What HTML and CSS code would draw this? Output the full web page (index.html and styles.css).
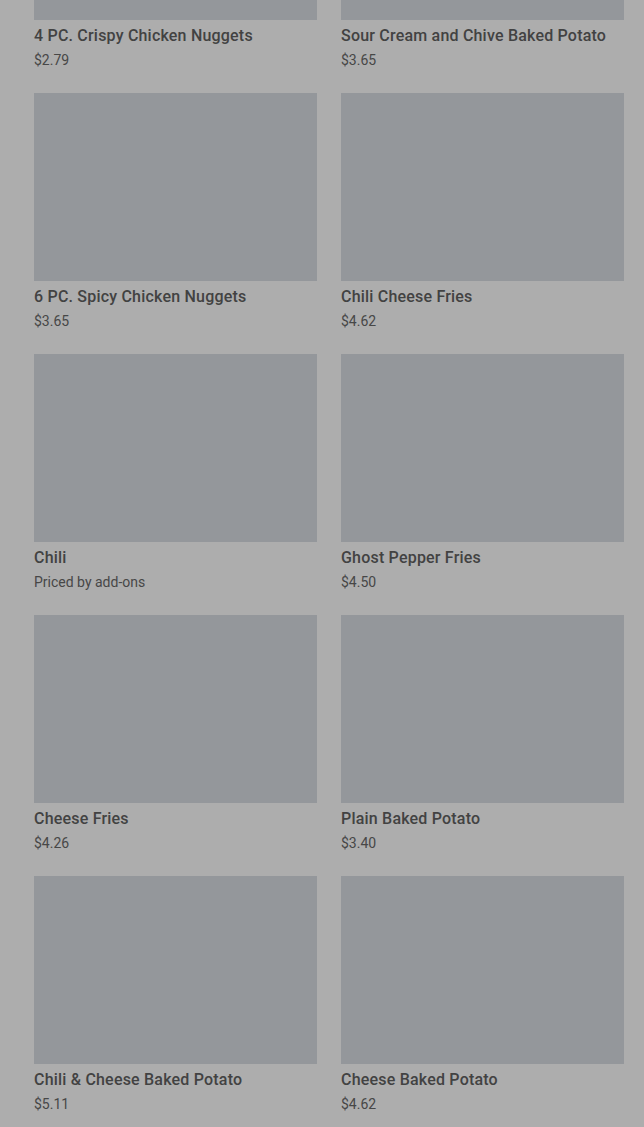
FILE: index.html
```html
<!DOCTYPE html>
<html lang="en">
<head>
    <meta charset="UTF-8" />
    <meta name="viewport" content="width=device-width, initial-scale=1.0" />
    <title>Menu - Sides</title>
    <link rel="stylesheet" href="styles.css">
</head>
<body>
    <div class="menu-grid">
        <div class="menu-item">
            <div class="item-image"></div>
            <div class="item-name">4 PC. Crispy Chicken Nuggets</div>
            <div class="item-price">$2.79</div>
        </div>
        <div class="menu-item">
            <div class="item-image"></div>
            <div class="item-name">Sour Cream and Chive Baked Potato</div>
            <div class="item-price">$3.65</div>
        </div>
        <div class="menu-item">
            <div class="item-image"></div>
            <div class="item-name">6 PC. Spicy Chicken Nuggets</div>
            <div class="item-price">$3.65</div>
        </div>
        <div class="menu-item">
            <div class="item-image"></div>
            <div class="item-name">Chili Cheese Fries</div>
            <div class="item-price">$4.62</div>
        </div>
        <div class="menu-item">
            <div class="item-image"></div>
            <div class="item-name">Chili</div>
            <div class="item-price">Priced by add-ons</div>
        </div>
        <div class="menu-item">
            <div class="item-image"></div>
            <div class="item-name">Ghost Pepper Fries</div>
            <div class="item-price">$4.50</div>
        </div>
        <div class="menu-item">
            <div class="item-image"></div>
            <div class="item-name">Cheese Fries</div>
            <div class="item-price">$4.26</div>
        </div>
        <div class="menu-item">
            <div class="item-image"></div>
            <div class="item-name">Plain Baked Potato</div>
            <div class="item-price">$3.40</div>
        </div>
        <div class="menu-item">
            <div class="item-image"></div>
            <div class="item-name">Chili &amp; Cheese Baked Potato</div>
            <div class="item-price">$5.11</div>
        </div>
        <div class="menu-item">
            <div class="item-image"></div>
            <div class="item-name">Cheese Baked Potato</div>
            <div class="item-price">$4.62</div>
        </div>
    </div>
</body>
</html>
```

FILE: styles.css
```css
* {
    margin: 0;
    padding: 0;
    box-sizing: border-box;
}

html, body {
    background-color: #adadad;
}

body {
    font-family: Roboto, 'Noto Sans', sans-serif;
    color: #3a3a3a;
    overflow: hidden;
}

/* page is scrolled part way down the list */
.menu-grid {
    display: grid;
    grid-template-columns: 283px 283px;
    column-gap: 24px;
    row-gap: 23px;
    padding: 0 20px 40px 34px;
    margin-top: -168px;
}

.item-image {
    height: 188px;
    background-color: #94979b;
}

.item-name {
    margin-top: 5px;
    font-size: 16px;
    font-weight: 500;
    line-height: 22px;
    letter-spacing: 0.2px;
    color: #424242;
}

.item-price {
    margin-top: 3px;
    font-size: 14px;
    line-height: 20px;
    color: #474747;
}
```
